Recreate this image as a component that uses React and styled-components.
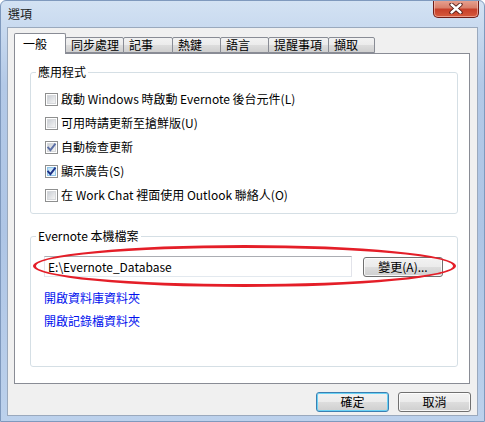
import React from 'react';
import styled, { createGlobalStyle } from 'styled-components';

const GlobalStyle = createGlobalStyle`
  html, body {
    margin: 0;
    padding: 0;
    background: #ffffff;
  }
  * {
    box-sizing: border-box;
  }
`;

const Window = styled.div`
  width: 485px;
  height: 422px;
  display: flex;
  flex-direction: column;
  border: 1px solid #7f99bd;
  border-radius: 6px 6px 0 0;
  background: linear-gradient(
    180deg,
    #d3e2f3 0%,
    #b3c9e7 20%,
    #aec5e5 55%,
    #bcd1ec 100%
  );
  font-family: 'Noto Sans CJK TC', 'Liberation Sans', sans-serif;
  font-size: 12px;
  color: #000;
  overflow: hidden;
`;

const TitleBar = styled.div`
  height: 26px;
  display: flex;
  justify-content: space-between;
  align-items: flex-start;
  padding-left: 7px;
`;

const Title = styled.div`
  padding-top: 6px;
  line-height: 14px;
  font-size: 12px;
  color: #1b1b1b;
`;

const CloseButton = styled.button`
  width: 46px;
  height: 18px;
  margin: -1px 5px 0 0;
  padding: 0;
  display: flex;
  align-items: center;
  justify-content: center;
  border: 1px solid #6e1d17;
  border-top: none;
  border-radius: 0 0 5px 5px;
  background: linear-gradient(
    180deg,
    #e8a493 0%,
    #d9806b 45%,
    #c7402a 55%,
    #d65a3c 100%
  );
  box-shadow: inset 0 0 0 1px rgba(255, 210, 200, 0.55);
`;

const Client = styled.div`
  flex: 1;
  margin: 0 6px 5px 6px;
  border: 1px solid #9aa9bd;
  background: #f0f0f0;
  display: flex;
  flex-direction: column;
`;

const TabRow = styled.div`
  display: flex;
  align-items: flex-end;
  height: 20px;
  margin-top: 5px;
  padding-left: 6px;
  position: relative;
  z-index: 1;
`;

const Tab = styled.div`
  width: ${({ $w }) => $w}px;
  height: ${({ $active }) => ($active ? 21 : 16)}px;
  margin-bottom: ${({ $active }) => ($active ? -1 : 0)}px;
  margin-left: ${({ $first }) => ($first ? 0 : -1)}px;
  padding-left: ${({ $active }) => ($active ? 8 : 5)}px;
  border: 1px solid #898c95;
  border-bottom: ${({ $active }) => ($active ? 'none' : '1px solid #898c95')};
  border-radius: 2px 2px 0 0;
  background: ${({ $active }) =>
    $active
      ? '#ffffff'
      : 'linear-gradient(180deg, #f2f2f2 0%, #ebebeb 50%, #dddddd 51%, #cfcfcf 100%)'};
  line-height: ${({ $active }) => ($active ? 19 : 14)}px;
  font-size: 12px;
  white-space: nowrap;
  position: relative;
  z-index: ${({ $active }) => ($active ? 2 : 1)};
`;

const Panel = styled.div`
  height: 331px;
  margin: 0 7px 0 6px;
  border: 1px solid #898c95;
  background: #ffffff;
  padding: 11px 11px 0 15px;
  display: flex;
  flex-direction: column;
`;

const GroupBox = styled.fieldset`
  margin: ${({ $gap }) => $gap}px 0 0 0;
  padding: 0 0 ${({ $bottom }) => $bottom}px 0;
  border: 1px solid #d5dfe5;
  border-radius: 3px;
  min-width: 0;
`;

const Legend = styled.legend`
  margin-left: 5px;
  padding: 0 2px;
  line-height: 14px;
  font-size: 12px;
`;

const CheckList = styled.div`
  padding: 8px 0 0 14px;
  display: flex;
  flex-direction: column;
`;

const CheckRow = styled.label`
  height: 24px;
  display: flex;
  align-items: center;
  gap: 3px;
  line-height: 14px;
  white-space: nowrap;
`;

const Box = styled.span`
  width: 13px;
  height: 13px;
  flex: none;
  display: flex;
  align-items: center;
  justify-content: center;
  border: 1px solid #8e8f8f;
  background: #ffffff;
  padding: 1px;
`;

const BoxFill = styled.span`
  width: 100%;
  height: 100%;
  display: block;
  position: relative;
  background: ${({ $hot }) =>
    $hot
      ? 'linear-gradient(135deg, #b9dcf6 0%, #e9f5fd 100%)'
      : 'linear-gradient(135deg, #cbcfd5 0%, #f4f4f4 100%)'};
  border: 1px solid ${({ $hot }) => ($hot ? '#8fc4e8' : '#d6d8db')};
`;

const CheckMark = styled.svg`
  position: absolute;
  left: -2px;
  top: -2px;
`;

const Body = styled.div`
  padding: 13px 14px 0 13px;
  display: flex;
  flex-direction: column;
`;

const PathRow = styled.div`
  display: flex;
  align-items: center;
  gap: 11px;
  position: relative;
`;

const PathInput = styled.div`
  flex: 1;
  height: 21px;
  border: 1px solid #e2e3ea;
  border-top-color: #abadb3;
  border-bottom-color: #e3e9ef;
  background: #ffffff;
  padding-left: 3px;
  display: flex;
  align-items: center;
  line-height: 14px;
`;

const Ring = styled.span`
  position: absolute;
  left: -11px;
  right: -13px;
  top: -11px;
  bottom: -10px;
  border: 3px solid #e41e28;
  border-radius: 50%;
  pointer-events: none;
`;

const Button = styled.button`
  width: ${({ $w }) => $w}px;
  height: 20px;
  padding: 0;
  border: 1px solid ${({ $primary }) => ($primary ? '#3c7fb1' : '#707070')};
  border-radius: 3px;
  background: linear-gradient(
    180deg,
    #f2f2f2 0%,
    #ebebeb 50%,
    #dddddd 51%,
    #cfcfcf 100%
  );
  box-shadow: inset 0 0 0 1px
    ${({ $primary }) => ($primary ? '#6ad2f5' : 'rgba(255, 255, 255, 0.8)')};
  font-family: inherit;
  font-size: 12px;
  line-height: 14px;
  color: #000;
  flex: none;
`;

const Links = styled.div`
  display: flex;
  flex-direction: column;
  gap: 9px;
  padding: 14px 0 0 0;
`;

const Link = styled.a`
  color: #0010ee;
  line-height: 14px;
  text-decoration: none;
  align-self: flex-start;
  cursor: pointer;
`;

const Footer = styled.div`
  display: flex;
  justify-content: flex-end;
  gap: 9px;
  margin-top: 8px;
  padding-right: 6px;
`;

const tabs = [
  { label: '一般', w: 52 },
  { label: '同步處理', w: 59 },
  { label: '記事', w: 50 },
  { label: '熱鍵', w: 49 },
  { label: '語言', w: 49 },
  { label: '提醒事項', w: 61 },
  { label: '擷取', w: 47 },
];

const options = [
  { label: '啟動 Windows 時啟動 Evernote 後台元件(L)' },
  { label: '可用時請更新至搶鮮版(U)' },
  { label: '自動檢查更新', checked: true, color: '#5b6fa6' },
  { label: '顯示廣告(S)', checked: true, color: '#1c3288', hot: true },
  { label: '在 Work Chat 裡面使用 Outlook 聯絡人(O)' },
];

const Check = ({ checked, color, hot }) => (
  <Box>
    <BoxFill $hot={hot}>
      {checked && (
        <CheckMark width="11" height="11" viewBox="0 0 11 11">
          <path
            d="M2.2 5.6 L4.4 8.2 L8.9 2.4"
            fill="none"
            stroke={color}
            strokeWidth="1.9"
            strokeLinecap="square"
            strokeLinejoin="miter"
          />
        </CheckMark>
      )}
    </BoxFill>
  </Box>
);

export default function App() {
  return (
    <>
      <GlobalStyle />
      <Window>
        <TitleBar>
          <Title>選項</Title>
          <CloseButton aria-label="關閉">
            <svg width="14" height="11" viewBox="0 0 14 11">
              <path
                d="M2.5 1.5 L11.5 9.5 M11.5 1.5 L2.5 9.5"
                stroke="#4a1410"
                strokeWidth="4.2"
                strokeLinecap="round"
              />
              <path
                d="M2.5 1.5 L11.5 9.5 M11.5 1.5 L2.5 9.5"
                stroke="#ffffff"
                strokeWidth="2.4"
                strokeLinecap="round"
              />
            </svg>
          </CloseButton>
        </TitleBar>
        <Client>
          <TabRow>
            {tabs.map((tab, index) => (
              <Tab
                key={tab.label}
                $w={tab.w}
                $active={index === 0}
                $first={index === 0}>
                {tab.label}
              </Tab>
            ))}
          </TabRow>
          <Panel>
            <GroupBox $gap={0} $bottom={6}>
              <Legend>應用程式</Legend>
              <CheckList>
                {options.map(option => (
                  <CheckRow key={option.label}>
                    <Check
                      checked={option.checked}
                      color={option.color}
                      hot={option.hot}
                    />
                    {option.label}
                  </CheckRow>
                ))}
              </CheckList>
            </GroupBox>
            <GroupBox $gap={15} $bottom={38}>
              <Legend>Evernote 本機檔案</Legend>
              <Body>
                <PathRow>
                  <PathInput>E:\Evernote_Database</PathInput>
                  <Button $w={80}>變更(A)...</Button>
                  <Ring />
                </PathRow>
                <Links>
                  <Link>開啟資料庫資料夾</Link>
                  <Link>開啟記錄檔資料夾</Link>
                </Links>
              </Body>
            </GroupBox>
          </Panel>
          <Footer>
            <Button $w={73} $primary>
              確定
            </Button>
            <Button $w={73}>取消</Button>
          </Footer>
        </Client>
      </Window>
    </>
  );
}
